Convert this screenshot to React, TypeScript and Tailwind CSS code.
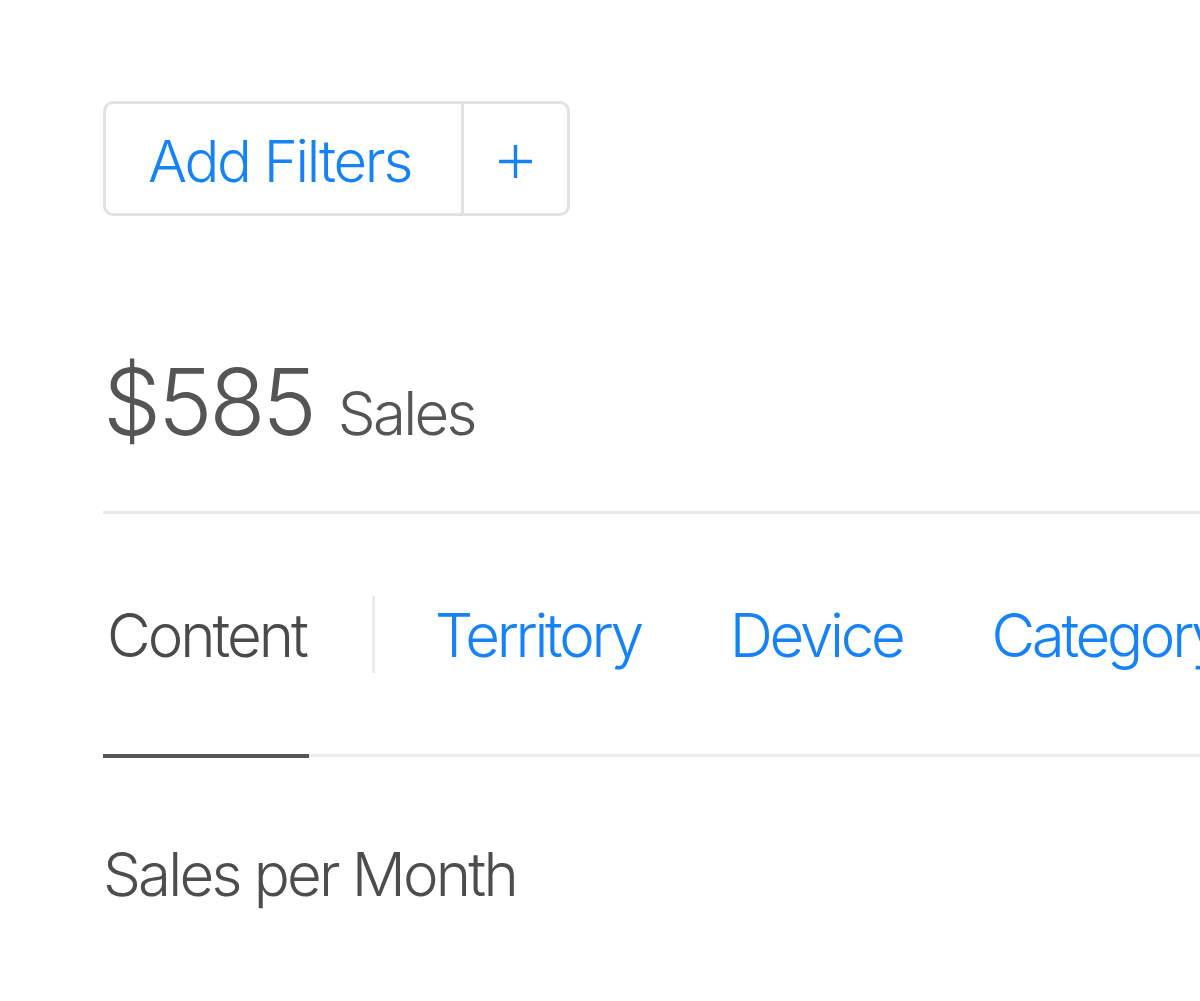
export default function App() {
  const tabs = ["Territory", "Device", "Category"];

  return (
    <div
      className="h-[1001px] w-[1200px] overflow-hidden bg-white pl-[103px] pt-[101px] font-[350] text-[#4d4d4d]"
      style={{ fontFamily: "Inter, 'Noto Sans', sans-serif" }}
    >
      {/* filter button group */}
      <div className="inline-flex h-[115px] rounded-[10px] border-[3px] border-[#e2e2e2]">
        <button className="flex w-[355px] items-center justify-center pr-[8px] pt-[4px] text-[58px] leading-none tracking-[-2.3px] text-[#1682f7]">
          Add Filters
        </button>
        <button className="flex w-[106px] items-center justify-center border-l-[3px] border-[#e2e2e2] pt-[6px] text-[#1682f7]">
          <svg width="33" height="33" viewBox="0 0 33 33" fill="none" stroke="currentColor" strokeWidth="3.4">
            <path d="M16.5 0v33M0 16.5h33" />
          </svg>
        </button>
      </div>

      {/* total */}
      <div className="mt-[140px] flex items-baseline gap-[24px] leading-none text-[#555555]">
        <span className="text-[92px] tracking-[-3.2px]">$585</span>
        <span className="text-[60px] tracking-[-2.7px]">Sales</span>
      </div>

      <div className="mt-[63px] h-[3px] w-[1100px] bg-[#e9e9e9]" />

      {/* tabs */}
      <div className="mt-[82px] flex h-[77px] items-center whitespace-nowrap text-[60px] leading-none tracking-[-3px]">
        <span className="ml-[4px] w-[204px] shrink-0 text-[#4a4a4a]">Content</span>
        <div className="ml-[61px] h-[77px] w-[3px] shrink-0 bg-[#ebebeb]" />
        <div className="ml-[60px] flex shrink-0 gap-[89px] tracking-[-3.3px] text-[#1682f7]">
          {tabs.map((t) => (
            <span key={t}>{t}</span>
          ))}
        </div>
      </div>

      <div className="mt-[81px] flex w-[1100px] items-start">
        <div className="h-[4px] w-[206px] bg-[#555555]" />
        <div className="h-[3px] flex-1 bg-[#ececec]" />
      </div>

      <div className="mt-[86px] text-[60px] leading-none tracking-[-2.8px] text-[#4d4d4d]">
        Sales per Month
      </div>
    </div>
  );
}
